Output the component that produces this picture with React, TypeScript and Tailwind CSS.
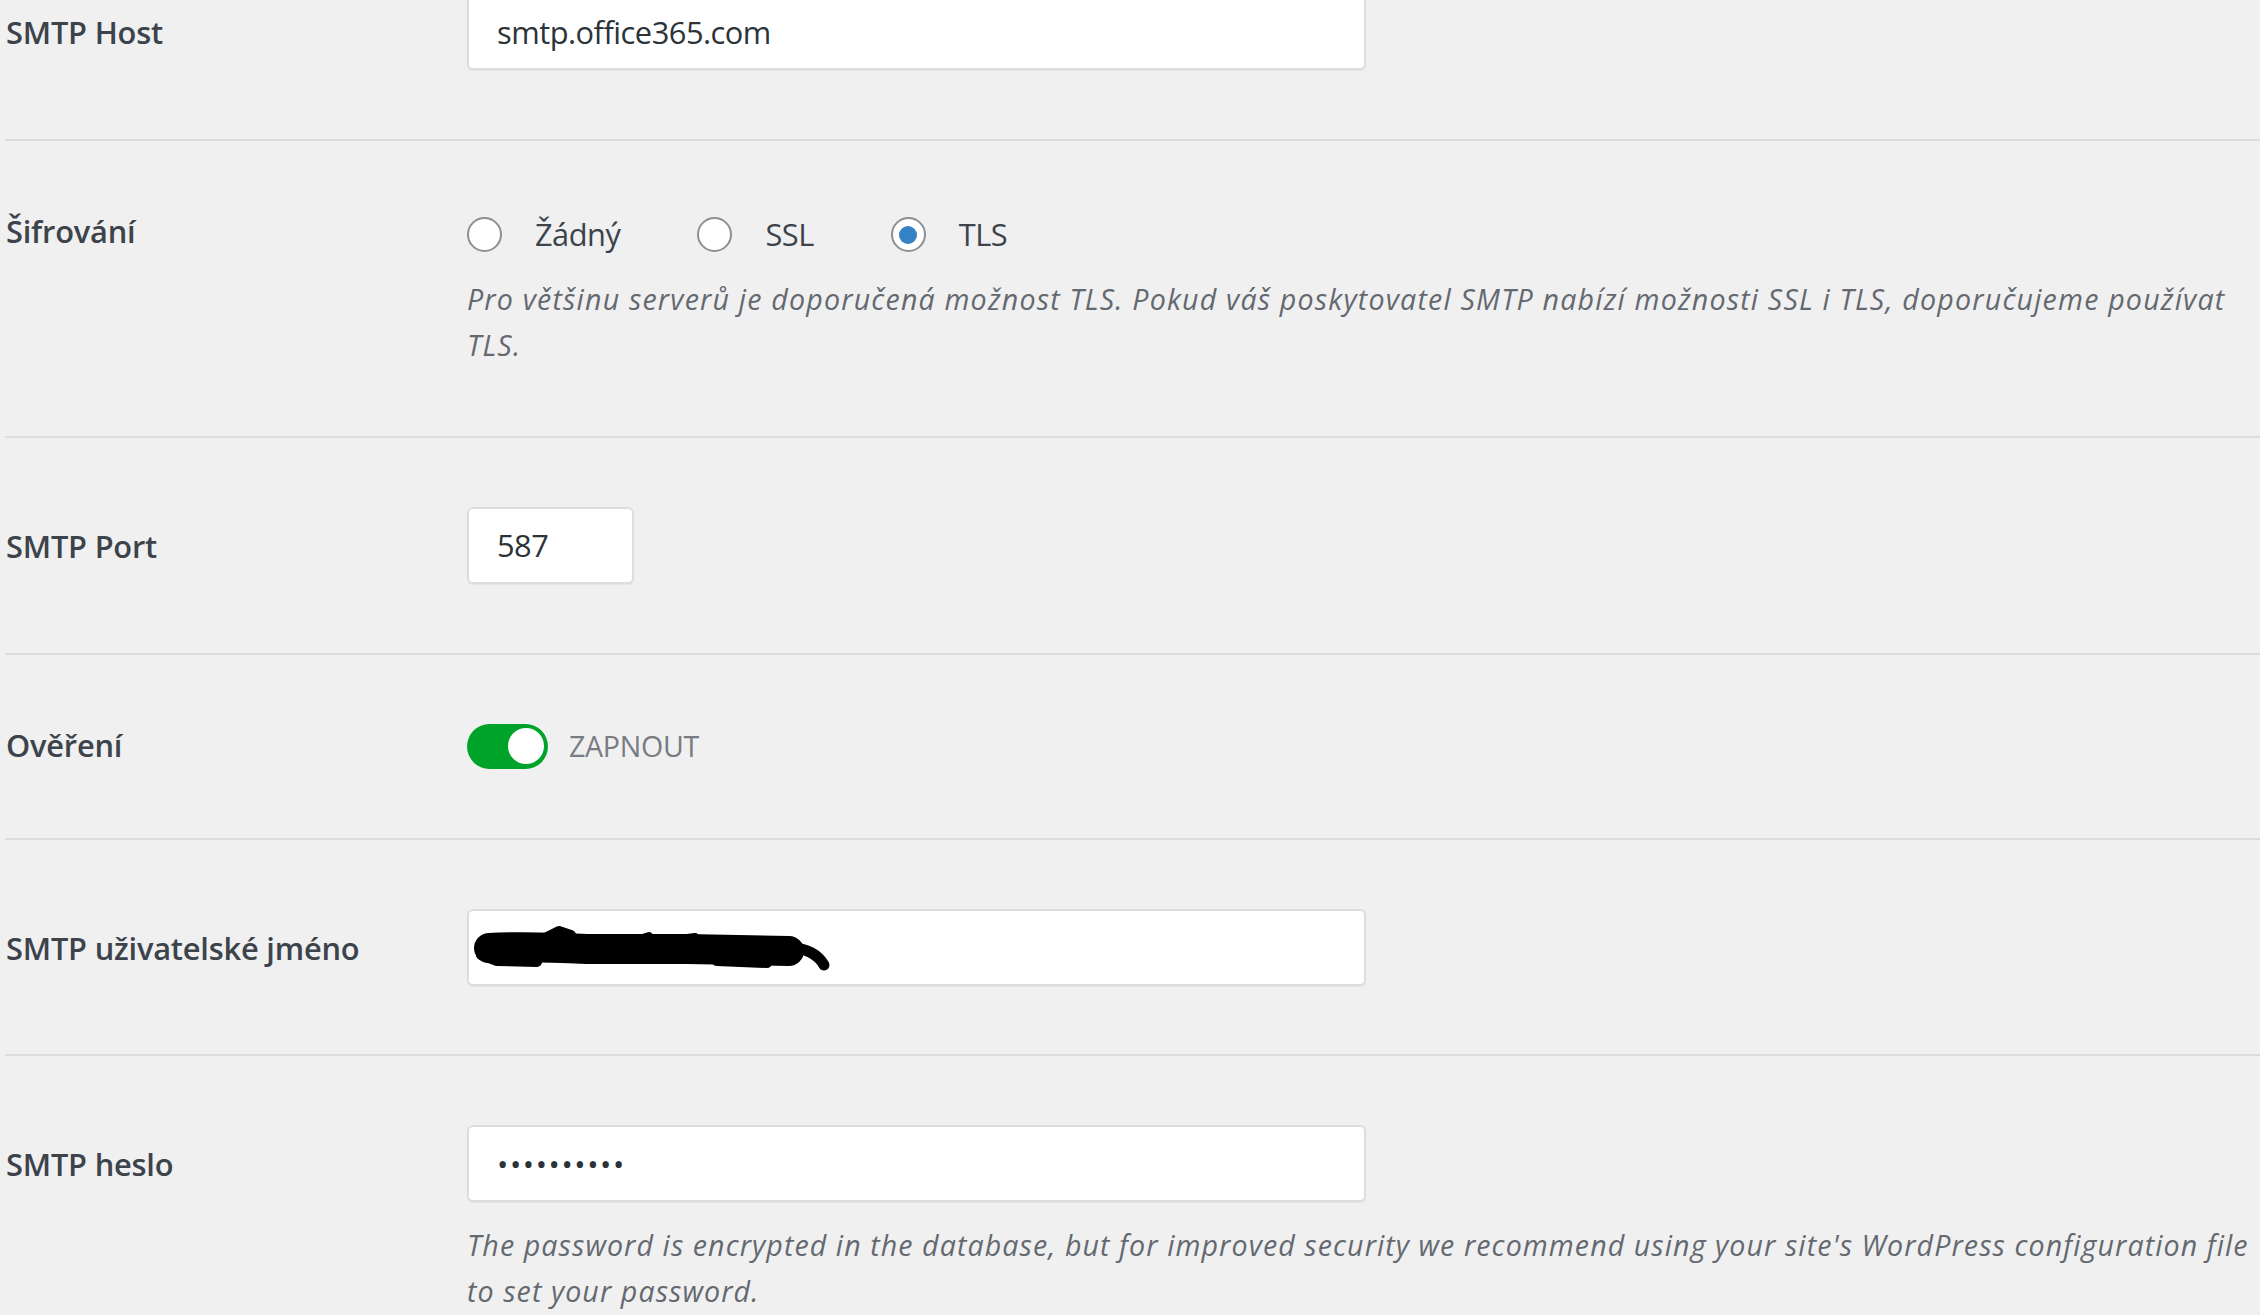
import React from "react";

function Row({
  label,
  labelH,
  children,
}: {
  label: string;
  labelH: string;
  children: React.ReactNode;
}) {
  return (
    <div className="grid grid-cols-[462px_1fr] border-b-2 border-[#dcdcde] py-[68.7px]">
      <div className={`flex items-center pl-[1px] pt-[2px] ${labelH}`}>
        <span className="text-[30.8px] font-semibold leading-none tracking-[-0.2px] text-[#3c434a]">
          {label}
        </span>
      </div>
      <div>{children}</div>
    </div>
  );
}

function TextInput({ value, w }: { value: React.ReactNode; w: string }) {
  return (
    <div
      className={`relative flex h-[77px] items-center rounded-[6px] border-2 border-[#dddddd] bg-white pl-[28px] shadow-[0_1px_0_#e4e4e4] ${w}`}
    >
      <span className="text-[30.8px] tracking-[-0.5px] text-[#2c3338]">{value}</span>
    </div>
  );
}

function Radio({ checked, label }: { checked?: boolean; label: string }) {
  return (
    <div className="flex items-center">
      <div className="flex h-[35px] w-[35px] items-center justify-center rounded-full border-2 border-[#8c8f94] bg-white">
        {checked && <div className="h-[18px] w-[18px] rounded-full bg-[#3582c4]" />}
      </div>
      <span className="ml-[33px] text-[30.8px] tracking-[-0.5px] text-[#3c434a]">{label}</span>
    </div>
  );
}

export default function App() {
  return (
    <div className="min-h-screen overflow-hidden bg-[#f0f0f1] font-['Open_Sans',sans-serif]">
      <div className="-mt-[75.5px] pl-[5px]">
        <Row label="SMTP Host" labelH="h-[77px]">
          <TextInput value="smtp.office365.com" w="w-[899px]" />
        </Row>

        <Row label="Šifrování" labelH="h-[42px]">
          <div className="flex h-[49px] items-center gap-[77px] pt-[1px]">
            <Radio label="Žádný" />
            <Radio label="SSL" />
            <Radio label="TLS" checked />
          </div>
          <p className="mt-[17px] text-[28.6px] italic leading-[46px] tracking-[1.18px] text-[#646970]">
            <span className="whitespace-nowrap">
              Pro většinu serverů je doporučená možnost TLS. Pokud váš poskytovatel SMTP nabízí možnosti SSL i TLS, doporučujeme používat
            </span>
            <br />
            TLS.
          </p>
        </Row>

        <Row label="SMTP Port" labelH="h-[77px]">
          <TextInput value="587" w="w-[167px]" />
        </Row>

        <Row label="Ověření" labelH="h-[42px]">
          <div className="flex h-[46px] items-center">
            <div className="flex h-[45px] w-[81px] items-center justify-end rounded-full bg-[#00a32a] pr-[4px]">
              <div className="h-[36px] w-[36px] rounded-full bg-white" />
            </div>
            <span className="ml-[21px] text-[28.6px] tracking-[-0.3px] text-[#787c82]">ZAPNOUT</span>
          </div>
        </Row>

        <Row label="SMTP uživatelské jméno" labelH="h-[77px]">
          <div className="relative w-[899px]">
            <TextInput value="" w="w-[899px]" />
            <svg
              className="absolute left-0 top-0"
              width="380"
              height="77"
              viewBox="0 0 380 77"
              fill="none"
              stroke="#000"
              strokeLinecap="round"
              strokeLinejoin="round"
            >
              <path d="M22 39 Q60 37 120 40 L220 40 Q280 41 322 42" strokeWidth="30" />
              <path d="M14 46 L30 52 L70 53" strokeWidth="10" />
              <path d="M80 28 L92 22 L104 26" strokeWidth="10" />
              <path d="M172 30 L182 27 M212 30 L228 28" strokeWidth="8" />
              <path d="M250 52 L300 54" strokeWidth="10" />
              <path d="M322 38 Q348 40 357 56" strokeWidth="11" />
            </svg>
          </div>
        </Row>

        <Row label="SMTP heslo" labelH="h-[77px]">
          <TextInput
            value={<span className="text-[30px] tracking-[1.6px]">••••••••••</span>}
            w="w-[899px]"
          />
          <p className="mt-[20px] text-[28.6px] italic leading-[46px] tracking-[1.08px] text-[#646970]">
            <span className="whitespace-nowrap">
              The password is encrypted in the database, but for improved security we recommend using your site's WordPress configuration file
            </span>
            <br />
            to set your password.
          </p>
        </Row>
      </div>
    </div>
  );
}
